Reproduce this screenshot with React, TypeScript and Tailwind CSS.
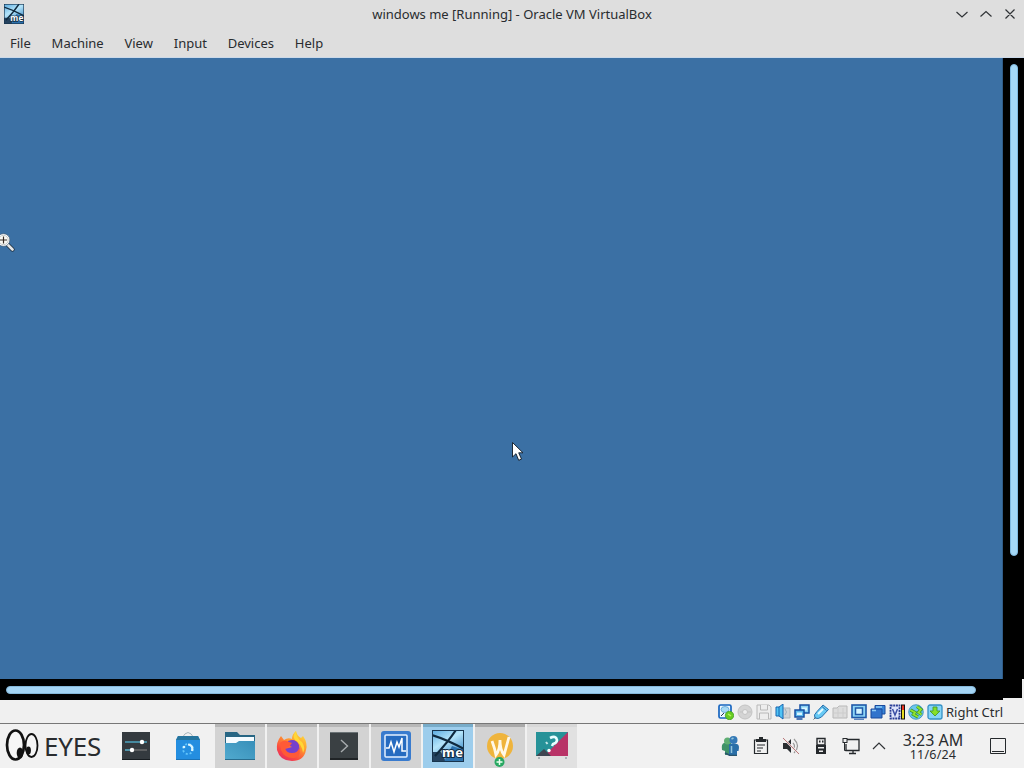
import type { ReactNode } from "react";

const menus = ["File", "Machine", "View", "Input", "Devices", "Help"];

function MeIcon({ className }: { className: string }) {
    return (
        <svg viewBox="0 0 32 32" className={className}>
            <defs>
                <linearGradient id="meSky" x1="0" y1="0" x2="0.6" y2="1">
                    <stop offset="0" stopColor="#58a9df" />
                    <stop offset="0.45" stopColor="#b5e5fa" />
                    <stop offset="1" stopColor="#3484c4" />
                </linearGradient>
            </defs>
            <rect width="32" height="32" fill="url(#meSky)" />
            <path d="M0 22L9 22L14 32H0Z" fill="#24425f" />
            <path d="M20 16L32 20V32H12Z" fill="#2c71ac" />
            <path d="M0 5Q16 10 32 19M24 0Q16 12 3 26" fill="none" stroke="#102a3e" strokeWidth="2.2" />
            <rect x="0.5" y="0.5" width="31" height="31" fill="none" stroke="#17344d" />
            <text x="10" y="27" fontFamily="Noto Sans, sans-serif" fontWeight="700" fontSize="13" fill="#fff" stroke="#102a3e" strokeWidth="2" paintOrder="stroke" textLength="21">me</text>
        </svg>
    );
}

function TitleBar() {
    return (
        <div className="relative h-[29px] flex items-center justify-center">
            <MeIcon className="absolute left-1 top-1 w-5 h-5" />
            <span className="text-[13px] leading-none">windows me [Running] - Oracle VM VirtualBox</span>
            <svg viewBox="0 0 64 14" className="absolute right-[6px] top-[7px] w-16 h-[14px]" fill="none" stroke="#303336" strokeWidth="1.2">
                <path d="M2.500 5L8 10L13.500 5M26.500 9.500L32 4.500L37.500 9.500M51.500 2.500L60.500 11.500M60.500 2.500L51.500 11.500" />
            </svg>
        </div>
    );
}

function MenuBar() {
    return (
        <div className="h-[29px] flex items-center gap-[20.8px] pl-[10px] text-[13px] leading-none">
            {menus.map((m) => (
                <span key={m}>{m}</span>
            ))}
        </div>
    );
}

function GuestScreen() {
    return (
        <div className="relative h-[642px] bg-black">
            <div className="w-[1003px] h-[621px] bg-[#3b70a4] border-r border-[#305c88]" />
            <div className="absolute right-[6px] top-[6px] w-2 h-[492px] rounded-full bg-[#a5d8f6] border border-[#80b9df]" />
            <div className="absolute left-[6px] top-[628px] w-[970px] h-2 rounded-full bg-[#a5d5f5] border border-[#86b8da]" />
            <div className="absolute right-0 top-[621px] w-[2px] h-[21px] bg-[#efefef]" />
            <div className="absolute right-0 bottom-0 w-[21px] h-[2px] bg-[#efefef]" />
            {/* zoom pointer */}
            <svg viewBox="0 0 16 20" className="absolute left-0 top-[174px] w-4 h-5">
                <path d="M8 13L12.500 17.500" stroke="#15202a" strokeWidth="4" strokeLinecap="round" />
                <path d="M8 13L12.500 17.500" stroke="#e4e7e9" strokeWidth="2.8" strokeLinecap="round" />
                <circle cx="3.500" cy="8" r="6.300" fill="#fff" stroke="#40566a" strokeWidth="0.6" />
                <circle cx="3.500" cy="8" r="4.700" fill="#fbfaf5" stroke="#b9bdbd" strokeWidth="0.8" />
                <path d="M0 8H7M3.500 4.500V11.500" stroke="#352a24" strokeWidth="1.2" />
            </svg>
            {/* mouse pointer */}
            <svg viewBox="0 0 12 20" className="absolute left-[512px] top-[384px] w-3 h-5">
                <path d="M0.500 0.500V15L4 11.700L6.700 18.300L9.500 17.100L6.700 10.800H11Z" fill="#fff" stroke="#101a24" strokeWidth="0.9" />
            </svg>
        </div>
    );
}

const statusIcons: ReactNode[] = [
    <>
        <rect x="1" y="1" width="12" height="13" rx="1.500" fill="#edf8ff" stroke="#1765c0" strokeWidth="1.700" />
        <ellipse cx="7" cy="5.500" rx="4" ry="3" fill="#a6d9f4" stroke="#4b96cf" strokeWidth="0.700" />
        <path d="M3 12L6 9" stroke="#23354c" />
        <circle cx="11.500" cy="11.500" r="4.200" fill="#68cc22" stroke="#399a1e" strokeWidth="0.700" />
        <path d="M10 10L13 12" stroke="#b6f55a" strokeWidth="1.500" />
    </>,
    <g fill="#d4d4d4" stroke="#c3c3c3">
        <circle cx="8" cy="8" r="7" />
        <circle cx="8" cy="8" r="2.500" fill="#eee" />
        <path d="M3 8H5M11 8H14" />
    </g>,
    <g fill="#ededed" stroke="#b8b8b8">
        <path d="M1 1H13L15 3V15H1Z" />
        <path d="M4.500 1V6H11.500V1M3.500 15V9H12.500V15" />
    </g>,
    <>
        <path d="M7 4H15V14H7Z" fill="#d1d3d5" stroke="#b0b5b8" />
        <path d="M1 3H4L8 0V15L4 12H1Z" fill="#4fc4f5" stroke="#1664b0" />
        <path d="M4 3V12" stroke="#1664b0" />
        <path d="M10 5Q13 8 10 11" fill="none" stroke="#9bb0bd" />
    </>,
    <g stroke="#164fa3" strokeWidth="1.500">
        <path d="M6 1H15V9H6Z" fill="#8bd2f4" />
        <path d="M8 3.500H13V6.500H8Z" fill="#d9f5ff" stroke="none" />
        <path d="M1 6H10V13H1Z" fill="#5fbaec" />
        <path d="M3 8.500H8V11H3Z" fill="#d9f5ff" stroke="none" />
        <path d="M2.500 15H8.500" />
    </g>,
    <>
        <path d="M10 1L15.500 5.500L8.500 13Q5 15.500 2 14Q0 11 4 7.500Z" fill="#67c9f4" stroke="#2a70ac" />
        <path d="M5 10L10 5" stroke="#e4faff" strokeWidth="2" />
        <path d="M9 2.500L13.500 6.500" stroke="#2a70ac" />
        <path d="M2.500 13.500L0.500 15.500" stroke="#596b77" />
    </>,
    <g fill="#dcdcdc" stroke="#b8b8b8">
        <path d="M1 4H5L7 2H15V14H1Z" />
        <path d="M2 9H15M6 4V14M11 4V14" stroke="#cccccc" />
    </g>,
    <>
        <rect x="1" y="1" width="14" height="12.500" fill="#8dd5f6" stroke="#1e58a8" strokeWidth="1.600" />
        <rect x="4.500" y="4" width="7" height="6.500" fill="#d3f4ff" stroke="#1e58a8" strokeWidth="1.500" />
        <path d="M3 15.200H13" stroke="#1e58a8" />
    </>,
    <>
        <path d="M5 1.500H15V10H5Z" fill="#3784d8" stroke="#1a4a9c" />
        <path d="M1 5H12V14H1Z" fill="#3274cc" stroke="#1a4a9c" />
        <path d="M6 3H12M2 6.500H6" stroke="#8ecbf6" strokeWidth="1.500" />
    </>,
    <>
        <rect x="1.500" y="1.500" width="9" height="13" fill="#dfe5fb" stroke="#2b3f98" strokeWidth="1.800" strokeDasharray="2 0.700" />
        <path d="M3.500 5L6 11L8.500 5" fill="none" stroke="#3b4ea4" strokeWidth="1.500" />
        <rect x="12" y="0.500" width="4" height="15" fill="#111" />
        <path d="M14 1.500V6" stroke="#e32" strokeWidth="2" />
        <path d="M14 6V14.500" stroke="#e9dc20" strokeWidth="2" />
    </>,
    <>
        <circle cx="8" cy="8" r="7.300" fill="#6ac6ed" stroke="#348bb9" strokeWidth="0.800" />
        <path d="M2.500 6L7 8.500L5.500 10.500L10 13M9 2.500L13 5.500L10.500 8.500L13.500 10.500" fill="none" stroke="#39912a" strokeWidth="3.200" />
        <path d="M2.500 6L7 8.500L5.500 10.500L10 13M9 2.500L13 5.500L10.500 8.500L13.500 10.500" fill="none" stroke="#92e32e" strokeWidth="1.900" />
    </>,
    <>
        <rect x="1" y="1" width="14" height="14" rx="2" fill="#86d5f7" stroke="#3590c5" strokeWidth="1.300" />
        <path d="M6 3H10V7H13L8 12L3 7H6Z" fill="#86df28" stroke="#45992f" strokeWidth="0.900" />
    </>,
];

function StatusBar() {
    return (
        <div className="h-[23px] flex items-center pl-[718px] pt-px">
            <div className="flex gap-[3px] shrink-0">
                {statusIcons.map((icon, i) => (
                    <svg key={i} viewBox="0 0 16 16" className="w-4 h-4">
                        {icon}
                    </svg>
                ))}
            </div>
            <span className="ml-[3px] pt-px text-[13px] leading-none whitespace-nowrap">Right Ctrl</span>
        </div>
    );
}

function EyesMenu() {
    return (
        <div className="w-[110px] flex items-center pl-[5px]">
            <svg viewBox="0 0 34 34" className="w-[34px] h-[34px] shrink-0">
                <g fill="#f6f6f6" stroke="#111">
                    <ellipse cx="10.500" cy="16" rx="8.500" ry="14.500" strokeWidth="2.700" />
                    <ellipse cx="26.500" cy="16.500" rx="6" ry="11.500" strokeWidth="1.800" />
                </g>
                <ellipse cx="15" cy="24" rx="3.300" ry="5.500" fill="#111" />
                <ellipse cx="23.500" cy="21.500" rx="2.400" ry="4" fill="#111" />
            </svg>
            <span className="ml-[5px] text-[26px] leading-none tracking-[-0.2px]">EYES</span>
        </div>
    );
}

function SettingsIcon() {
    return (
        <svg viewBox="0 0 28 28" className="w-7 h-7">
            <rect width="28" height="28" fill="#343a3f" />
            <path d="M0 27.500H28" stroke="#171c20" />
            <path d="M3 10H25" stroke="#4ca5c1" strokeWidth="1.500" />
            <path d="M3 18H25" stroke="#6b6d6e" strokeWidth="1.500" />
            <path d="M3 18H10" stroke="#4ca5c1" strokeWidth="1.500" />
            <circle cx="20" cy="10" r="2.200" fill="#fff" />
            <circle cx="10" cy="18" r="2.200" fill="#fff" />
        </svg>
    );
}

function DiscoverIcon() {
    return (
        <svg viewBox="0 0 26 28" className="w-[26px] h-7">
            <path d="M7 6Q13 -5 19 6" fill="none" stroke="#a9b7bd" />
            <path d="M3 4H23L25 8V28H1V8Z" fill="#248ee0" />
            <path d="M3 4H23L25 8H1Z" fill="#26759e" />
            <path d="M1 27.500H25" stroke="#1b72b6" />
            <circle cx="13" cy="17" r="5" fill="none" stroke="#61c4fb" strokeWidth="1.800" strokeDasharray="2 2" />
            <path d="M13 12.500Q18.500 13 17 19" fill="none" stroke="#d9f5ff" strokeWidth="2.200" />
            <circle cx="9" cy="15" r="1.300" fill="#d9f5ff" />
        </svg>
    );
}

function FolderIcon() {
    return (
        <svg viewBox="0 0 30 28" className="w-[30px] h-7">
            <defs>
                <linearGradient id="folder" x1="0" y1="1" x2="1" y2="0">
                    <stop stopColor="#51aacf" />
                    <stop offset="1" stopColor="#388fb9" />
                </linearGradient>
            </defs>
            <path d="M0 0H12L15 3H30V15H0Z" fill="#276684" />
            <path d="M1 5H29V15H1Z" fill="#f4fbff" />
            <path d="M0 11H11L14 9H30V28H0Z" fill="url(#folder)" />
            <path d="M0 27.500H30" stroke="#286c8e" />
        </svg>
    );
}

function FirefoxIcon() {
    return (
        <svg viewBox="0 0 32 32" className="w-8 h-8">
            <defs>
                <linearGradient id="fire" x1="0.85" y1="0" x2="0.2" y2="1">
                    <stop stopColor="#ffe43b" />
                    <stop offset="0.4" stopColor="#ff9830" />
                    <stop offset="0.75" stopColor="#fb493f" />
                    <stop offset="1" stopColor="#e32c68" />
                </linearGradient>
            </defs>
            <path d="M5 6L8 10Q12 7 16 9Q16 4 20 1Q21 6 25 8L27 6Q32 13 30 20Q28 31 16 31Q4 31 1 20Q0 12 5 6Z" fill="url(#fire)" />
            <path d="M12 11Q20 8 23 15Q25 23 17 25Q10 25 9 19L16 17L12 15Z" fill="#7640cd" />
            <path d="M4 13Q8 9 13 12L16 13L13 17L9 18Q10 23 16 23Q22 23 23 18Q26 27 17 28Q8 28 5 20Z" fill="#ff5a36" />
            <path d="M20 1Q20 8 26 12Q30 18 27 23Q26 14 19 10Q16 6 20 1Z" fill="#ffd737" />
        </svg>
    );
}

function KonsoleIcon() {
    return (
        <svg viewBox="0 0 28 28" className="w-7 h-7">
            <rect width="28" height="28" fill="#3a4043" />
            <path d="M0 0.500H28" stroke="#6a7275" />
            <path d="M0 27H28" stroke="#202426" strokeWidth="2" />
            <path d="M11 8L17.500 14L11 20" fill="none" stroke="#a8acae" strokeWidth="1.400" />
        </svg>
    );
}

function VBoxIcon() {
    return (
        <svg viewBox="0 0 30 30" className="w-[30px] h-[30px]">
            <rect width="30" height="30" rx="3" fill="#397bce" />
            <rect x="4" y="4" width="22" height="22" rx="1" fill="#266bc0" stroke="#e3f1ff" strokeWidth="1.500" />
            <path d="M5 17H8L10 11L13 21L16 11L18 16L21 7V20H25" fill="none" stroke="#fff" strokeWidth="1.500" />
        </svg>
    );
}

function WineIcon() {
    return (
        <svg viewBox="0 0 28 36" className="w-7 h-9">
            <circle cx="14" cy="14" r="13" fill="#efb43c" />
            <path d="M6 9Q9 17 10 23Q14 18 14 8Q14 18 18 23Q20 16 23 5" fill="none" stroke="#fff8e7" strokeWidth="2.800" />
            <circle cx="13.500" cy="30" r="5" fill="#28a862" />
            <path d="M10.500 30H16.500M13.500 27V33" stroke="#eaffef" strokeWidth="1.500" />
        </svg>
    );
}

function HelpIcon() {
    return (
        <svg viewBox="0 0 32 28" className="w-8 h-7">
            <path d="M0 0H32V24H0Z" fill="#269298" />
            <path d="M32 0V24H8Z" fill="#b83367" />
            <path d="M0 24L8 17L15 24Z" fill="#3f4651" />
            <path d="M14 6Q20 3 21 8Q21 11 17 12L16 14" fill="none" stroke="#e8feff" strokeWidth="2.600" />
            <circle cx="13" cy="18.500" r="1.700" fill="#fff" />
            <path d="M10 10L11.500 12" stroke="#c6e8e8" strokeWidth="2" />
            <path d="M2 26H4M29 26H31" stroke="#71808c" />
        </svg>
    );
}

const tasks = [
    { icon: <FolderIcon />, style: "bg-[#d3d3d3] border-[#b7b7b7]" },
    { icon: <FirefoxIcon />, style: "bg-[#d3d3d3] border-[#b7b7b7]" },
    { icon: <KonsoleIcon />, style: "bg-[#d3d3d3] border-[#b7b7b7]" },
    { icon: <VBoxIcon />, style: "bg-[#d3d3d3] border-[#b7b7b7]" },
    { icon: <MeIcon className="w-8 h-8" />, style: "bg-[#9dcdec] border-[#78acc9]" },
    { icon: <div className="pt-[9px]"><WineIcon /></div>, style: "bg-[#d3d3d3] border-[#aaaaaa]" },
    { icon: <HelpIcon />, style: "bg-[#e1e1e1] border-[#d8d8d8]" },
];

const trayIcons: ReactNode[] = [
    <>
        <path d="M3 7Q0 8 1 14L4 15V19H10V7Z" fill="#3f9268" />
        <circle cx="6.500" cy="5" r="3.500" fill="#5fae72" />
        <path d="M8 8H16Q19 9 17.500 15H16V20H8Z" fill="#2a6fa8" />
        <circle cx="12.500" cy="4" r="4" fill="#3479b6" />
        <path d="M10.500 10V17M10.500 3L12.500 2" stroke="#94c5dc" strokeWidth="1.500" />
        <path d="M4 17L9 19.500H16" fill="none" stroke="#29546d" strokeWidth="1.500" />
    </>,
    <>
        <path d="M3.500 4H16.500V17.500H3.500Z" fill="none" stroke="#25292c" strokeWidth="1.200" />
        <path d="M5 3H8V1H12V3H15V6H5Z" fill="#25292c" />
        <path d="M6 9H14M6 12H12M6 15H10" stroke="#25292c" strokeWidth="1.200" />
    </>,
    <>
        <path d="M2 7H6L10 3V17L6 13H2Z" fill="#292d30" />
        <path d="M12 7Q15 10 12 13M13 3Q20 10 13 17" fill="none" stroke="#999" strokeWidth="1.200" />
        <path d="M2 2L18 18" stroke="#f0e8e8" strokeWidth="1.800" />
        <path d="M2 2L18 18" stroke="#b87c7e" strokeWidth="1" />
    </>,
    <>
        <path d="M6 2.500H14V9H6Z" fill="none" stroke="#25292c" strokeWidth="1.400" />
        <path d="M8 5.500H9.500M11 5.500H12.500" stroke="#25292c" strokeWidth="1.800" />
        <path d="M5 9H15V18H5Z" fill="#25292c" />
        <path d="M7 11H13V12.500H7ZM8 14.500H12V16H8Z" fill="#eee" />
    </>,
    <>
        <path d="M6 3.500H18V14.500H5V8M8 17.500H15M12 15V17" fill="none" stroke="#25292c" strokeWidth="1.300" />
        <rect x="2" y="2.500" width="4" height="4" fill="#eee" stroke="#25292c" />
        <path d="M3.500 7V14.500H6" fill="none" stroke="#25292c" />
    </>,
];

function Taskbar() {
    return (
        <div className="h-[45px] flex border-t border-[#777] bg-[#f1f1f1]">
            <EyesMenu />
            <div className="w-[52px] flex items-center justify-center"><SettingsIcon /></div>
            <div className="w-[52px] flex items-center justify-center"><DiscoverIcon /></div>
            <div className="flex gap-[2px] ml-px">
                {tasks.map((task, i) => (
                    <div key={i} className={`w-[50px] h-full flex items-center justify-center border-t-[3px] pb-[4px] ${task.style}`}>
                        {task.icon}
                    </div>
                ))}
            </div>
            <div className="flex items-center ml-auto mr-[17px]">
                <div className="flex gap-[10px]">
                    {trayIcons.map((icon, i) => (
                        <svg key={i} viewBox="0 0 20 20" className="w-5 h-5">{icon}</svg>
                    ))}
                </div>
                <svg viewBox="0 0 14 10" className="w-[14px] h-[10px] ml-[11px]">
                    <path d="M1 8L7 2L13 8" fill="none" stroke="#303336" strokeWidth="1.200" />
                </svg>
                <div className="w-[72px] ml-[11px] pt-[2px] text-center">
                    <div className="text-[16px] leading-[15px] whitespace-nowrap">3:23 AM</div>
                    <div className="text-[12.5px] leading-[13px] tracking-[0.2px]">11/6/24</div>
                </div>
                <svg viewBox="0 0 18 18" className="w-[18px] h-[18px] ml-5">
                    <path d="M1.500 1.500H16.500V16.500H1.500ZM3 14.500H15" fill="none" stroke="#25292c" />
                </svg>
            </div>
        </div>
    );
}

export default function App() {
    return (
        <div className="w-[1024px] h-[768px] overflow-hidden bg-[#f0f0f0] text-[#292c2f] font-['Noto_Sans',sans-serif]">
            <div className="h-[58px] bg-[#dedede] border-b border-[#cbd9e9]">
                <TitleBar />
                <MenuBar />
            </div>
            <GuestScreen />
            <StatusBar />
            <Taskbar />
        </div>
    );
}
